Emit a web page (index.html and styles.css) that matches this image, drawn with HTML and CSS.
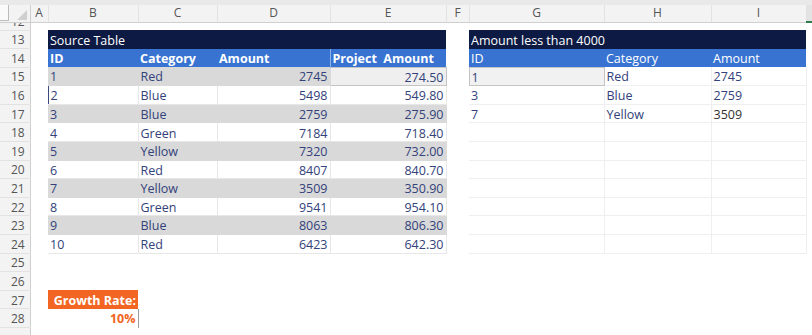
FILE: index.html
```html
<!DOCTYPE html>
<html lang="en">
<head>
  <meta charset="UTF-8">
  <title>Amount less than 4000</title>
  <link rel="stylesheet" href="styles.css">
</head>
<body>
  <div class="topbar"></div>
  <table class="sheet">
    <colgroup>
      <col class="w-rn"><col class="w-a"><col class="w-b"><col class="w-c"><col class="w-d">
      <col class="w-e"><col class="w-f"><col class="w-g"><col class="w-h"><col class="w-i"><col class="w-j">
    </colgroup>
    <tr class="colhead">
      <th class="corner"><span class="namebox"></span><span class="tri"></span></th>
      <th>A</th><th>B</th><th>C</th><th>D</th><th>E</th><th>F</th><th>G</th><th>H</th><th>I</th><th class="sel"></th>
    </tr>
    <tr class="r12">
      <th class="rn"><div class="clip"><span>12</span></div></th>
      <td colspan="10"></td>
    </tr>
    <tr>
      <th class="rn">13</th><td></td>
      <td colspan="4" class="title">Source Table</td><td></td>
      <td colspan="3" class="title">Amount less than 4000</td><td></td>
    </tr>
    <tr>
      <th class="rn">14</th><td></td>
      <td class="head">ID</td><td class="head">Category</td><td class="head">Amount</td><td class="head split">Project&nbsp; Amount</td><td></td>
      <td class="head2">ID</td><td class="head2">Category</td><td class="head2">Amount</td><td></td>
    </tr>
    <tr class="band">
      <th class="rn">15</th><td></td>
      <td class="d">1</td><td class="d">Red</td><td class="d num">2745</td><td class="d num active">274.50</td><td></td>
      <td class="f pick">1</td><td class="f">Red</td><td class="f">2745</td><td></td>
    </tr>
    <tr>
      <th class="rn">16</th><td></td>
      <td class="d cursor">2</td><td class="d">Blue</td><td class="d num">5498</td><td class="d num">549.80</td><td></td>
      <td class="f">3</td><td class="f">Blue</td><td class="f">2759</td><td></td>
    </tr>
    <tr class="band">
      <th class="rn">17</th><td></td>
      <td class="d">3</td><td class="d">Blue</td><td class="d num">2759</td><td class="d num">275.90</td><td></td>
      <td class="f">7</td><td class="f">Yellow</td><td class="f dark">3509</td><td></td>
    </tr>
    <tr>
      <th class="rn">18</th><td></td>
      <td class="d">4</td><td class="d">Green</td><td class="d num">7184</td><td class="d num">718.40</td><td></td>
      <td class="f"></td><td class="f"></td><td class="f"></td><td></td>
    </tr>
    <tr class="band">
      <th class="rn">19</th><td></td>
      <td class="d">5</td><td class="d">Yellow</td><td class="d num">7320</td><td class="d num">732.00</td><td></td>
      <td class="f"></td><td class="f"></td><td class="f"></td><td></td>
    </tr>
    <tr>
      <th class="rn">20</th><td></td>
      <td class="d">6</td><td class="d">Red</td><td class="d num">8407</td><td class="d num">840.70</td><td></td>
      <td class="f"></td><td class="f"></td><td class="f"></td><td></td>
    </tr>
    <tr class="band">
      <th class="rn">21</th><td></td>
      <td class="d">7</td><td class="d">Yellow</td><td class="d num">3509</td><td class="d num">350.90</td><td></td>
      <td class="f"></td><td class="f"></td><td class="f"></td><td></td>
    </tr>
    <tr>
      <th class="rn">22</th><td></td>
      <td class="d">8</td><td class="d">Green</td><td class="d num">9541</td><td class="d num">954.10</td><td></td>
      <td class="f"></td><td class="f"></td><td class="f"></td><td></td>
    </tr>
    <tr class="band">
      <th class="rn">23</th><td></td>
      <td class="d">9</td><td class="d">Blue</td><td class="d num">8063</td><td class="d num">806.30</td><td></td>
      <td class="f"></td><td class="f"></td><td class="f"></td><td></td>
    </tr>
    <tr>
      <th class="rn">24</th><td></td>
      <td class="d">10</td><td class="d">Red</td><td class="d num">6423</td><td class="d num">642.30</td><td></td>
      <td class="f"></td><td class="f"></td><td class="f"></td><td></td>
    </tr>
    <tr>
      <th class="rn">25</th><td colspan="10"></td>
    </tr>
    <tr>
      <th class="rn">26</th><td colspan="10"></td>
    </tr>
    <tr>
      <th class="rn">27</th><td></td>
      <td class="rate-label">Growth Rate:</td><td colspan="8"></td>
    </tr>
    <tr>
      <th class="rn">28</th><td></td>
      <td class="rate">10%</td><td colspan="8"></td>
    </tr>
    <tr>
      <th class="rn"></th><td colspan="10"></td>
    </tr>
  </table>
</body>
</html>
```

FILE: styles.css
```css
* { margin:0; padding:0; box-sizing:border-box; }

:root {
  --navy: #0d1a44;
  --blue: #3873d2;
  --band: #d9d9d9;
  --ink: #33427a;
  --orange: #f26522;
  --grid: #e7e7e7;
  --head-bg: #f3f3f3;
  --head-ink: #555;
  --row-h: 18.6px;
}

body {
  background: #fff;
  font-family: "Open Sans", "Liberation Sans", sans-serif;
  font-size: 12px;
  color: var(--ink);
  overflow: hidden;
}

.topbar {
  height: 5px;
  background: #e8e9e8;
}

.sheet {
  table-layout: fixed;
  border-collapse: collapse;
  width: 812px;
}

.w-rn { width: 30px; }
.w-a { width: 18px; }
.w-b { width: 90px; }
.w-c { width: 79px; }
.w-d { width: 113px; }
.w-e { width: 116px; }
.w-f { width: 23px; }
.w-g { width: 135px; }
.w-h { width: 107px; }
.w-i { width: 95px; }
.w-j { width: 6px; }

.sheet td,
.sheet th {
  height: var(--row-h);
  padding: 3px 2px 0;
  white-space: nowrap;
  overflow: hidden;
  text-align: left;
  line-height: 1;
  font-size: 12.5px;
}

.sheet th {
  font-weight: normal;
  font-size: 12px;
}

/* column letters */
.colhead th {
  height: 17px;
  padding: 0;
  background: var(--head-bg);
  color: var(--head-ink);
  text-align: center;
  border-right: 1px solid #e2e2e2;
  border-bottom: 1px solid #cfcfcf;
}

.colhead .corner {
  position: relative;
  border-right: 1px solid #cfcfcf;
}

.namebox {
  position: absolute;
  left: 0;
  top: -1px;
  width: 9px;
  height: 17px;
  border: 1px solid #bdbdbd;
  border-left: none;
  background: #fafafa;
}

.tri {
  position: absolute;
  right: 3px;
  bottom: 2px;
  width: 0;
  height: 0;
  border-left: 10px solid transparent;
  border-bottom: 10px solid #cfcfcf;
}

.colhead .sel {
  background: #e3e3e3;
  border-bottom: 2px solid #2f7d4f;
}

/* row numbers */
.sheet .rn {
  background: var(--head-bg);
  color: var(--head-ink);
  border-right: 1px solid #cfcfcf;
  border-bottom: 1px solid #e2e2e2;
  text-align: center;
  padding: 2px 0 0 6px;
}

.sheet .r12 th,
.sheet .r12 td {
  height: 8px;
  padding-top: 0;
}

.clip {
  height: 7px;
  overflow: hidden;
}

.clip span {
  display: block;
  margin-top: -7px;
}

/* tables */
.sheet .title {
  background: var(--navy);
  color: #fff;
}

.sheet .head {
  background: var(--blue);
  color: #fff;
  font-weight: bold;
}

.sheet .head.split {
  border-left: 1px solid #8fb2e6;
}

.sheet .head2 {
  background: var(--blue);
  color: #fff;
}

.sheet .d {
  border-right: 1px solid var(--grid);
  border-bottom: 1px solid var(--grid);
}

.sheet .band .d {
  background: var(--band);
  border-color: var(--band);
}

.sheet .band .d:nth-child(6) {
  border-left: 1px solid #efefef;
}

.sheet .num {
  text-align: right;
}

.sheet .d.active {
  background: #efefef;
  border: 1px solid #c4c4c4;
}

.sheet .d.cursor {
  border-left: 1px solid #3b4a7e;
}

.sheet .f {
  border-right: 1px solid #efefef;
  border-bottom: 1px solid #efefef;
}

.sheet .f.pick {
  background: #f1f1f1;
  border: 1px solid #c4c4c4;
}

.sheet .f.dark {
  color: #333;
}

.sheet .rate-label {
  background: var(--orange);
  color: #fff;
  font-weight: bold;
  text-align: right;
}

.sheet .rate {
  color: var(--orange);
  font-weight: bold;
  text-align: right;
  border-right: 1px solid #9a9a9a;
}
```
